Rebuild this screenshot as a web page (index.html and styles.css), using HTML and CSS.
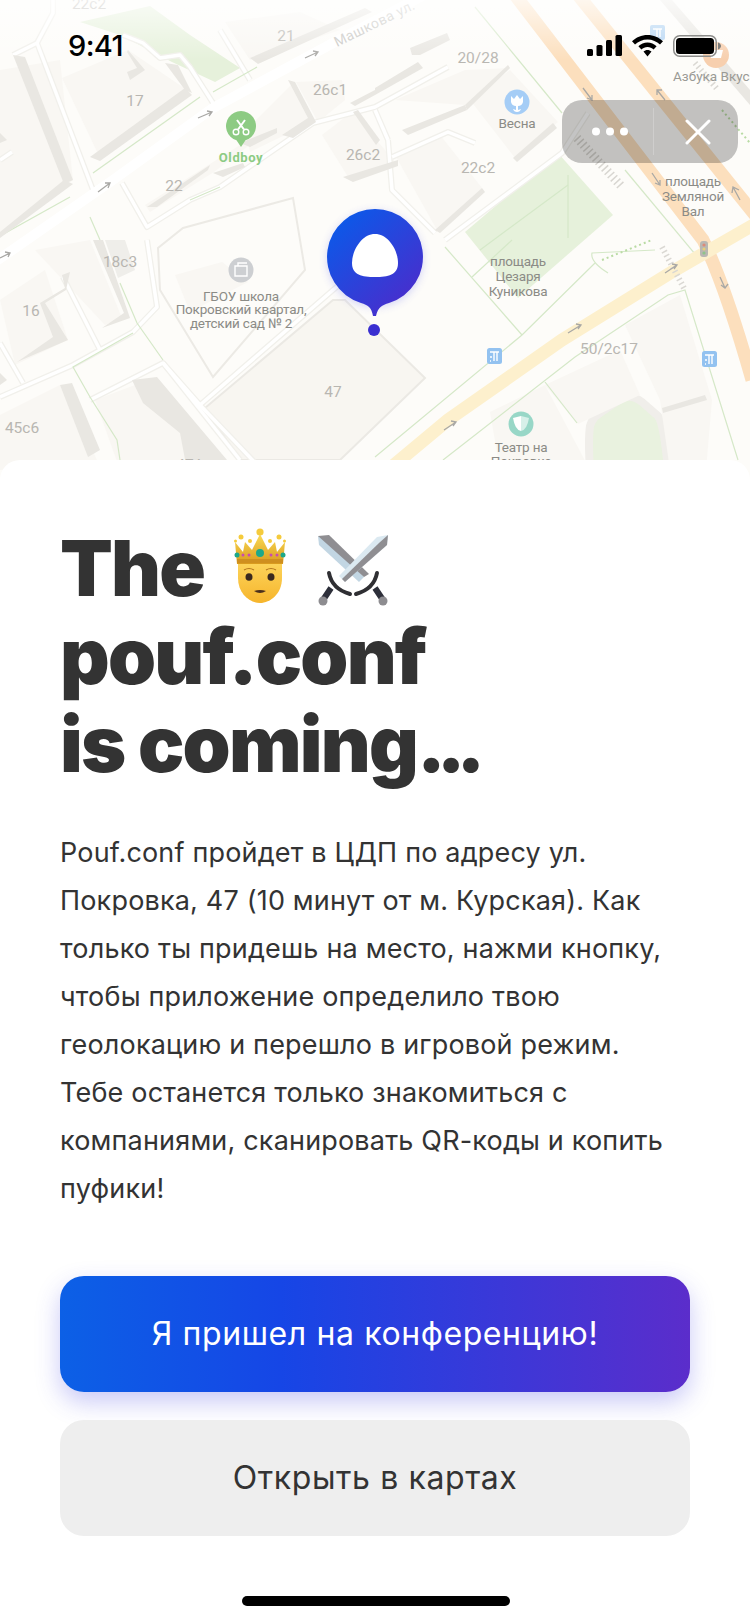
FILE: index.html
```html
<!DOCTYPE html>
<html lang="ru">
<head>
<meta charset="utf-8">
<title>pouf.conf</title>
<link rel="stylesheet" href="styles.css">
</head>
<body>
<main class="screen">
  <section class="map">
    <svg class="map-canvas" viewBox="0 0 750 484" width="750" height="484" xmlns="http://www.w3.org/2000/svg">
      <defs>
        <linearGradient id="pinGrad" x1="0.15" y1="0.1" x2="0.85" y2="0.95">
          <stop offset="0" stop-color="#0d58e8"/><stop offset="1" stop-color="#4c2bcb"/>
        </linearGradient>
        <linearGradient id="fade" x1="0" y1="0" x2="0" y2="1">
          <stop offset="0" stop-color="#fff" stop-opacity=".75"/><stop offset="1" stop-color="#fff" stop-opacity="0"/>
        </linearGradient>
        <filter id="pinGlow" x="-30%" y="-30%" width="160%" height="160%"><feGaussianBlur stdDeviation="4"/></filter>
        <g id="roads">
          <path d="M53 0 L53 13 L37 43 L93 190"/>
          <path d="M37 43 L13 55"/>
          <path d="M123 35 L143 43 L160 58 L180 55 L190 67 L213 103"/>
          <path d="M220 30 L250 80"/>
          <path d="M122 183 L147 227 L190 200 L220 187 L313 123 L375 107 L448 67"/>
          <path d="M147 240 L157 307 L133 332 L73 365 L0 397"/>
          <path d="M163 363 L240 460"/>
          <path d="M90 400 L163 363 L200 405 L333 290 L373 257"/>
          <path d="M63 277 L100 350"/>
          <path d="M0 343 L23 383"/>
          <path d="M388 140 L392 190 L435 233"/>
          <path d="M392 157 L448 132 L475 143"/>
          <path d="M375 110 L388 140"/>
          <path d="M445 240 L562 153 L588 113"/>
          <path d="M200 405 L262 470"/>
          <path d="M0 160 L12 152"/>
        </g>
      </defs>
      <rect class="land" width="750" height="484"/>

      <g class="park">
        <polygon points="80,22 150,6 190,35 240,68 215,82 172,62 120,35"/>
        <polygon points="558,153 613,215 518,298 465,232"/>
        <path class="park-ring" d="M600 413 L622 398 Q632 394 642 402 L658 416 Q664 424 668 470 L590 470 Q588 440 590 426 Q592 418 600 413Z"/>
      </g>

      <g class="block">
        <polygon points="0,70 60,60 73,180 0,235"/>
        <polygon points="62,78 128,50 190,92 100,158"/>
        <polygon points="246,130 292,84 312,122 250,152"/>
        <polygon points="145,205 240,145 272,128 214,172 150,212"/>
        <polygon points="296,82 342,80 345,100 318,122"/>
        <polygon points="322,135 352,112 398,165 350,180"/>
        <polygon points="225,22 300,12 340,30 250,60"/>
        <polygon points="395,100 465,70 510,68 465,105"/>
        <polygon points="470,100 510,70 558,122 515,158"/>
        <polygon points="395,155 440,135 482,188 437,230"/>
        <polygon points="175,275 222,262 248,282 190,312"/>
        <polygon points="0,300 45,270 68,340 15,365"/>
        <polygon points="35,250 90,240 122,318 105,325"/>
        <polygon class="block-edge" points="205,408 333,300 345,300 425,378 340,460 240,460"/>
        <polygon points="0,415 60,385 98,462 0,470"/>
        <polygon points="95,400 135,385 215,460 120,470"/>
        <polygon points="545,385 620,350 640,395 578,424"/>
        <polygon points="625,325 680,295 712,400 706,470 670,470 660,400"/>
        <polygon points="490,412 545,385 590,470 500,470"/>
      </g>

      <polygon class="gray-patch" points="105,240 125,240 135,270 118,278"/>
      <polygon class="lot-line" points="183,228 293,198 305,270 213,377 160,290 158,248"/>
      <use href="#roads" class="road-casing"/>
      <use href="#roads" class="road-core"/>
      <path class="lane" d="M-5 262 L113 180 L213 108 L333 43 L430 -8"/>

      <g class="walk">
        <path d="M93 173 L200 97"/>
        <path d="M0 236 L70 197"/>
        <path d="M257 67 L213 92"/>
        <path d="M190 200 L220 187"/>
        <path d="M90 217 L100 240"/>
        <path d="M120 283 L137 323 L163 360"/>
        <path d="M133 333 L73 367 L90 397 L117 440 L120 460"/>
        <path d="M475 7 L562 113"/>
        <path d="M445 247 L522 335"/>
        <path d="M472 277 L512 240"/>
        <path d="M375 457 L522 335 L595 263"/>
        <path d="M443 460 L575 357 L668 295 L685 290 L738 460"/>
        <path d="M545 382 L577 423"/>
        <path d="M608 273 Q590 262 592 253 L655 250"/>
        <path d="M480 250 L568 185"/>
        <path d="M568 175 L568 238"/>
        <path d="M625 170 L700 260"/>
      </g>
      <g class="orange">
        <path d="M515 -5 L703 240 Q725 285 752 380"/>
        <path d="M578 -5 L755 215"/>
      </g>
      <path class="yellow" d="M388 470 L448 420 L562 340 L675 270 L755 224"/>

      <path class="zebra" d="M577 138 L622 187"/>
      <path class="zebra-thin" d="M662 247 L685 290"/>
      <path class="zebra-thin" d="M695 63 L718 90"/>
      <path class="dotted" d="M722 110 L750 143"/>
      <path class="dotted" d="M602 260 L652 240"/>

      <g class="shadow">
        <polygon points="13,55 25,57 73,180 64,184"/>
        <polygon points="0,232 64,180 73,184 0,238"/>
        <polygon points="90,157 185,88 192,95 100,161"/>
        <polygon points="165,63 178,65 192,93 185,90"/>
        <polygon points="128,50 145,70 130,80 127,72 137,68 127,52"/>
        <polygon points="250,58 365,8 372,12 258,64"/>
        <polygon points="375,88 418,62 423,68 375,95"/>
        <polygon points="410,48 447,33 450,40 420,55 412,55"/>
        <polygon points="288,80 295,82 316,122 293,138 282,135 308,118"/>
        <polygon points="147,207 210,165 208,170 157,207"/>
        <polygon points="213,173 243,163 245,167 223,177"/>
        <polygon points="240,143 277,128 277,133 250,147"/>
        <polygon points="343,177 398,160 398,166 353,182"/>
        <polygon points="353,112 358,110 380,140 376,145"/>
        <polygon points="350,103 375,90 375,95 355,106"/>
        <polygon points="402,130 465,105 467,110 408,135"/>
        <polygon points="465,105 508,65 510,68 467,110"/>
        <polygon points="513,158 553,123 557,128 517,162"/>
        <polygon points="435,230 482,188 485,192 440,233"/>
        <polygon points="93,240 103,240 130,318 102,328 124,313"/>
        <polygon points="62,275 70,272 66,290 45,303 68,340 17,362 53,337 40,303 65,288"/>
        <polygon points="60,385 72,383 100,450 88,457"/>
        <polygon points="132,380 157,377 227,460 227,470 187,470 180,433 143,403"/>
        <polygon points="0,373 7,380 0,385"/>
        <polygon points="0,133 7,140 0,143"/>
        <polygon points="662,408 705,395 707,400 663,413"/>
        <polygon points="660,0 672,0 750,90 750,105"/>
      </g>

      <g class="num">
        <text x="89" y="9">22с2</text>
        <text x="286" y="41">21</text>
        <text x="135" y="106">17</text>
        <text x="330" y="95">26с1</text>
        <text x="363" y="160">26с2</text>
        <text x="174" y="191">22</text>
        <text x="478" y="63">20/28</text>
        <text x="478" y="173">22с2</text>
        <text x="120" y="267">18с3</text>
        <text x="31" y="316">16</text>
        <text x="333" y="397">47</text>
        <text x="22" y="433">45с6</text>
        <text x="190" y="470">47А</text>
        <text x="609" y="354">50/2с17</text>
      </g>
      <text class="street" transform="translate(337 47) rotate(-26)">Машкова ул.</text>

      <g class="label">
        <text x="517" y="128">Весна</text>
        <text x="693" y="186">площадь</text>
        <text x="693" y="201">Земляной</text>
        <text x="693" y="216">Вал</text>
        <text class="label-start" x="673" y="81">Азбука Вкуса</text>
        <text x="241" y="301">ГБОУ школа</text>
        <text x="241" y="314">Покровский квартал,</text>
        <text x="241" y="328">детский сад № 2</text>
        <text x="518" y="266">площадь</text>
        <text x="518" y="281">Цезаря</text>
        <text x="518" y="296">Куникова</text>
        <text x="521" y="452">Театр на</text>
        <text x="521" y="466">Покровке</text>
      </g>
      <text class="label-green" x="241" y="162">Oldboy</text>

      <!-- POI icons -->
      <path class="poi-green" d="M241 147 L236.500 140.300 A15 15 0 1 1 245.500 140.300 Z"/>
      <g class="poi-glyph">
        <circle cx="236" cy="132" r="2.800"/><circle cx="246" cy="132" r="2.800"/>
        <path d="M238 129.500 L245 120 M244 129.500 L237 120"/>
      </g>
      <circle class="poi-blue" cx="517" cy="102" r="12.500"/>
      <path class="poi-white" d="M511 96 L514 99 L517 95 L520 99 L523 96 L523 102 Q522 106 518 106 L518 110 L521 109 Q520 112 517 112 Q514 112 513 109 L516 110 L516 106 Q512 106 511 102Z"/>
      <circle class="poi-orange" cx="716" cy="55" r="13"/>
      <path class="poi-white" d="M709 50 H723 L721 58 H711Z"/>
      <circle class="poi-gray" cx="241" cy="270" r="12.500"/>
      <path class="poi-glyph-thin" d="M235 276 V266 H247 V276 Z M238 266 V263 H247"/>
      <circle class="poi-teal" cx="521" cy="424" r="12.500"/>
      <path class="poi-white" d="M513 418 L521 416 L521 431 Q515 430 513 418Z"/>
      <path class="poi-dim" d="M521 416 L529 418 Q527 430 521 431Z"/>
      <g class="bus">
        <rect x="487" y="348" width="15" height="16" rx="2.500"/><path d="M490 352 H499 M497 352 V361 M494 352 V361 M490 357 H492 M490 361 H491"/>
      </g>
      <g class="bus">
        <rect x="702" y="351" width="15" height="16" rx="2.500"/><path d="M705 355 H714 M712 355 V364 M709 355 V364 M705 360 H707 M705 364 H706"/>
      </g>
      <g class="bus faded">
        <rect x="650" y="25" width="15" height="15" rx="2"/><path d="M653 29 H662 M660 29 V37 M657 29 V37"/>
      </g>
      <rect class="traffic" x="700" y="241" width="8" height="16" rx="3"/>
      <circle class="tl-r" cx="704" cy="245" r="1.600"/><circle class="tl-y" cx="704" cy="249" r="1.600"/><circle class="tl-g" cx="704" cy="253" r="1.600"/>

      <g class="arrows">
        <path d="M198 118 L212 112 M207 111 L212 112 L209 116"/>
        <path d="M98 192 L110 183 M105 183 L110 183 L108 188"/>
        <path d="M305 58 L318 52 M313 51 L318 52 L315 56"/>
        <path d="M0 258 L10 253 M5 252 L10 253 L8 257"/>
        <path d="M583 88 L592 100 M587 98 L592 100 L592 95"/>
        <path d="M665 100 L657 90 M657 95 L657 90 L662 90"/>
        <path d="M652 173 L660 185 M655 183 L660 185 L660 180"/>
        <path d="M740 200 L733 187 M732 193 L733 187 L739 190"/>
        <path d="M568 333 L581 325 M576 324 L581 325 L578 329"/>
        <path d="M444 430 L456 422 M451 421 L456 422 L453 426"/>
        <path d="M665 273 L677 265 M672 264 L677 265 L674 269"/>
        <path d="M720 277 L725 288 M721 285 L725 288 L728 284"/>
      </g>

      <rect class="top-fade" width="750" height="60"/>

      <!-- brand pin -->
      <circle class="pin-glow" cx="375" cy="259" r="48" filter="url(#pinGlow)"/>
      <path class="pin-body" d="M375 209 A48 48 0 0 1 389 302.900 C382 305 378 307 376 316 L373 316 C371.500 307 368 305 361 302.900 A48 48 0 0 1 375 209 Z"/>
      <path class="pin-egg" d="M375 234 C388 234 398 250 398 263 C398 275 388 277 375 277 C362 277 352 275 352 263 C352 250 362 234 375 234 Z"/>
      <circle class="pin-dot" cx="374" cy="330" r="6"/>
    </svg>

    <header class="status">
      <span class="clock">9:41</span>
      <span class="status-icons">
        <svg width="35" height="21" viewBox="0 0 35 21" xmlns="http://www.w3.org/2000/svg" class="ink"><rect x="0" y="14" width="6" height="7" rx="1.500"/><rect x="9.500" y="10" width="6" height="11" rx="1.500"/><rect x="19" y="5" width="6" height="16" rx="1.500"/><rect x="28.500" y="0" width="6.500" height="21" rx="1.500"/></svg>
        <svg width="31" height="22" viewBox="0 0 31 22" xmlns="http://www.w3.org/2000/svg" class="ink"><path d="M15.500 0 C21.500 0 27 2.400 31 6.300 L28 9.500 C24.800 6.400 20.400 4.400 15.500 4.400 C10.600 4.400 6.200 6.400 3 9.500 L0 6.300 C4 2.400 9.500 0 15.500 0Z M15.500 7.600 C18.900 7.600 22.200 9 24.600 11.300 L21.600 14.500 C20 13 17.900 12 15.500 12 C13.100 12 11 13 9.400 14.500 L6.400 11.300 C8.800 9 12.100 7.600 15.500 7.600Z M15.500 15 C17 15 18.400 15.600 19.500 16.600 L15.500 21.500 L11.500 16.600 C12.600 15.600 14 15 15.500 15Z"/></svg>
        <svg width="48" height="22" viewBox="0 0 48 22" xmlns="http://www.w3.org/2000/svg"><rect class="bat-frame" x="0.750" y="0.750" width="42.500" height="20.500" rx="6"/><rect class="bat-fill" x="3" y="3" width="38" height="16" rx="3.500"/><path class="bat-cap" d="M45 7.500 C46.800 8.200 48 9.400 48 11 C48 12.600 46.800 13.800 45 14.500Z"/></svg>
      </span>
    </header>

    <div class="capsule">
      <div class="capsule-part capsule-more">
        <svg width="36" height="9" viewBox="0 0 36 9" xmlns="http://www.w3.org/2000/svg" class="white"><circle cx="4" cy="4.500" r="4"/><circle cx="18" cy="4.500" r="4"/><circle cx="32" cy="4.500" r="4"/></svg>
      </div>
      <span class="capsule-sep"></span>
      <div class="capsule-part capsule-close">
        <svg width="26" height="26" viewBox="0 0 26 26" xmlns="http://www.w3.org/2000/svg" class="cross"><path d="M2 2 L24 24 M24 2 L2 24"/></svg>
      </div>
    </div>
  </section>

  <section class="sheet">
    <h1 class="title">
      <span class="title-line">The
        <svg class="emoji crown" width="52" height="75" viewBox="0 0 52 75" xmlns="http://www.w3.org/2000/svg">
          <defs>
            <linearGradient id="face" x1="0" y1="0" x2="0" y2="1"><stop offset="0" stop-color="#fdd65e"/><stop offset="1" stop-color="#f6b52c"/></linearGradient>
            <linearGradient id="gold" x1="0" y1="0" x2="0" y2="1"><stop offset="0" stop-color="#fbdc55"/><stop offset="1" stop-color="#d99a1d"/></linearGradient>
          </defs>
          <path fill="url(#face)" d="M4 32 H48 V50 C48 66 36 75 26 75 C16 75 4 66 4 50 Z"/>
          <path fill="url(#gold)" d="M3 36 L1 14 L9 24 L11 14 L18 22 L26 6 L34 22 L41 14 L43 24 L51 14 L49 36 Z"/>
          <rect fill="#cf8f1e" x="3" y="31" width="46" height="4"/>
          <circle fill="#f5cb3c" cx="26" cy="4" r="3.600"/><circle fill="#f5cb3c" cx="7" cy="9" r="2.500"/><circle fill="#f5cb3c" cx="45" cy="9" r="2.500"/><circle fill="#f5cb3c" cx="16" cy="13" r="2"/><circle fill="#f5cb3c" cx="36" cy="13" r="2"/><circle fill="#f5cb3c" cx="1.500" cy="13" r="1.500"/><circle fill="#f5cb3c" cx="50.500" cy="13" r="1.500"/>
          <circle fill="#1ca889" cx="26" cy="25" r="4"/><circle fill="#1ca889" cx="3" cy="27" r="2.500"/><circle fill="#1ca889" cx="49" cy="27" r="2.500"/>
          <circle fill="#c94bb0" cx="9" cy="27" r="1.500"/><circle fill="#c94bb0" cx="15" cy="27" r="1.500"/><circle fill="#c94bb0" cx="37" cy="27" r="1.500"/><circle fill="#c94bb0" cx="43" cy="27" r="1.500"/>
          <ellipse fill="#3b2a1e" cx="15" cy="49" rx="3.500" ry="3.800"/><ellipse fill="#3b2a1e" cx="37" cy="49" rx="3.500" ry="3.800"/>
          <path class="brow" d="M10 42 Q15 39 20 42 M32 42 Q37 39 42 42"/>
          <path fill="#4a2f1c" d="M20 63 Q26 61 32 63 Q26 67 20 63Z"/>
        </svg>
        <svg class="emoji swords" width="72" height="71" viewBox="0 0 72 71" xmlns="http://www.w3.org/2000/svg">
          <polygon fill="#c2d6e3" points="1,1 2,10 42,47 47,42 8,3"/>
          <polygon fill="#8f8e92" points="1,1 12,0 52,39 47,42"/>
          <polygon fill="#dbe9f1" points="71,0 60,2 22,41 28,47 70,10"/>
          <polygon fill="#8f8e92" points="71,0 70,10 28,47 25,44 62,8"/>
          <path class="guard" d="M12 38 Q15 54 33 59 M60 38 Q57 54 39 59"/>
          <path class="hilt" d="M14 53 L6 65 M58 53 L66 65"/>
          <circle fill="#8d8c90" cx="6" cy="66" r="4.500"/><circle fill="#8d8c90" cx="66" cy="66" r="4.500"/>
        </svg>
      </span>
      <span class="title-line">pouf.conf</span>
      <span class="title-line">is coming<span class="dots">...</span></span>
    </h1>
    <p class="body">Pouf.conf пройдет в ЦДП по адресу ул.<br>Покровка, 47 (10 минут от м. Курская). Как<br>только ты придешь на место, нажми кнопку,<br>чтобы приложение определило твою<br>геолокацию и перешло в игровой режим.<br>Тебе останется только знакомиться с<br>компаниями, сканировать QR-коды и копить<br>пуфики!</p>
    <div class="actions">
      <button class="btn btn-primary" type="button">Я пришел на конференцию!</button>
      <button class="btn btn-secondary" type="button">Открыть в картах</button>
    </div>
    <div class="home-bar"></div>
  </section>
</main>
</body>
</html>
```
FILE: styles.css
```css
* { box-sizing: border-box; }
html, body { margin: 0; padding: 0; background: #fff; }
.screen { width: 750px; height: 1624px; overflow: hidden; position: relative; font-family: Inter, "Liberation Sans", sans-serif; color: #333; }

.map { position: relative; height: 484px; overflow: hidden; }
.map-canvas { display: block; }
.land { fill: #fdfcf9; }
.park polygon { fill: #e6f1db; stroke: none; }
.park-ring { fill: #e9f2df; stroke: #f0eeea; stroke-width: 8; }
.block polygon { fill: #f9f7f3; }
.block .block-edge { fill: #f8f6f1; stroke: #ebe9e4; stroke-width: 2; }
.gray-patch { fill: #efeeea; }
.lot-line { fill: none; stroke: #eceae5; stroke-width: 2; }
.shadow polygon { fill: #e9e7e2; }
.road-casing { fill: none; stroke: #f1f0eb; stroke-width: 6; stroke-linejoin: round; }
.road-core { fill: none; stroke: #fff; stroke-width: 3.500; stroke-linejoin: round; }
.lane { fill: none; stroke: #fff; stroke-width: 10; }
.walk path { fill: none; stroke: #d5e8c8; stroke-width: 1.200; }
.orange path { fill: none; stroke: #fcdfbd; stroke-width: 13; }
.yellow { fill: none; stroke: #fdf0cd; stroke-width: 13; }
.zebra { fill: none; stroke: #d8d6d1; stroke-width: 9; stroke-dasharray: 1.500 3; }
.zebra-thin { fill: none; stroke: #dad8d3; stroke-width: 6; stroke-dasharray: 1.500 3; }
.dotted { fill: none; stroke: #b9dba4; stroke-width: 2; stroke-dasharray: 2 3; }
.top-fade { fill: url(#fade); }

.num text { font: 400 15.500px Roboto, sans-serif; fill: #b8b6b1; text-anchor: middle; }
.street { font: 400 14px Roboto, sans-serif; fill: #c7c6c2; letter-spacing: .4px; }
.label text { font: 400 13.500px Roboto, sans-serif; fill: #8b8b86; text-anchor: middle; letter-spacing: -.2px; }
.label .label-start { text-anchor: start; font-size: 13.500px; fill: #9a9a95; letter-spacing: 0; }
.label-green { font: 700 13px Roboto, sans-serif; fill: #8ccb83; text-anchor: middle; letter-spacing: .6px; }
.poi-green { fill: #8dcb83; }
.poi-glyph path { fill: none; stroke: #fff; stroke-width: 2; }
.poi-glyph circle { fill: none; stroke: #fff; stroke-width: 1.400; }
.poi-blue { fill: #a5cdf6; }
.poi-white { fill: #fff; }
.poi-dim { fill: #d7f0e9; }
.poi-orange { fill: #f7cfae; }
.poi-gray { fill: #cdcfd2; }
.poi-glyph-thin { fill: none; stroke: #fff; stroke-width: 1.400; }
.poi-teal { fill: #98d7c7; }
.bus rect { fill: #93c2f0; }
.bus path { fill: none; stroke: #fff; stroke-width: 1.400; }
.bus.faded { opacity: .7; }
.traffic { fill: #b9b7b2; }
.tl-r { fill: #dd8a78; }
.tl-y { fill: #e6cf7a; }
.tl-g { fill: #8fc48a; }
.arrows path { fill: none; stroke: #a9a8a5; stroke-width: 1.300; }

.pin-glow { fill: #3f45e8; opacity: .22; }
.pin-body { fill: url(#pinGrad); }
.pin-egg { fill: #fff; }
.pin-dot { fill: #3a2fd0; }

.status { position: absolute; top: 0; left: 0; right: 0; height: 60px; }
.clock { position: absolute; left: 68px; top: 28px; font: 500 29px/36px Inter, sans-serif; color: #000; letter-spacing: -.6px; }
.status-icons { position: absolute; left: 587px; top: 35px; width: 134px; display: flex; justify-content: space-between; align-items: flex-start; }
.ink { fill: #000; }
.bat-frame { fill: none; stroke: #8c8c8a; stroke-width: 1.500; }
.bat-fill { fill: #000; }
.bat-cap { fill: #7c7c7a; }

.capsule { position: absolute; left: 562px; top: 100px; width: 176px; height: 63px; border-radius: 20px; background: rgba(0, 0, 0, .23); display: grid; grid-template-columns: 91px 1px 84px; align-items: center; }
.capsule-part { display: flex; justify-content: center; align-items: center; }
.capsule-more { padding-left: 5px; }
.capsule-close { padding-left: 4px; }
.capsule-sep { height: 47px; background: rgba(255, 255, 255, .22); }
.white { fill: #fff; }
.cross path { fill: none; stroke: #fff; stroke-width: 3; stroke-linecap: round; }

.sheet { position: relative; margin-top: -24px; height: 1164px; padding: 64px 60px 0; background: #fff; border-radius: 20px 20px 0 0; }
.title { margin: 0; font: 900 77px/88px Inter, sans-serif; letter-spacing: -1.800px; color: #333; }
.title-line { display: block; height: 88px; white-space: nowrap; }
.dots { letter-spacing: -9px; }
.emoji { display: inline-block; }
.crown { margin-left: 16px; vertical-align: -7px; }
.swords { margin-left: 18px; vertical-align: -10px; }
.brow { fill: none; stroke: #b5761e; stroke-width: 1.200; }
.guard { fill: none; stroke: #2f2f33; stroke-width: 4; stroke-linecap: round; }
.hilt { fill: none; stroke: #2d2f3a; stroke-width: 6; }

.body { margin: 41px 0 0; font: 400 27px/48px Inter, sans-serif; color: #333; letter-spacing: .18px; white-space: nowrap; }

.actions { margin-top: 63px; display: flex; flex-direction: column; gap: 28px; }
.btn { display: block; width: 630px; height: 116px; border: 0; border-radius: 24px; font: 400 32px/116px Inter, sans-serif; padding: 0; letter-spacing: .6px; }
.btn-primary { color: #fff; background: linear-gradient(90deg, #0c60e6 0%, #1646e6 35%, #3b38d8 70%, #5b2dcb 100%); box-shadow: 0 10px 24px rgba(60, 60, 225, .28); }
.btn-secondary { color: #333; background: #eee; }

.home-bar { position: absolute; left: 242px; top: 1136px; width: 268px; height: 10px; border-radius: 5px; background: #000; }
```
